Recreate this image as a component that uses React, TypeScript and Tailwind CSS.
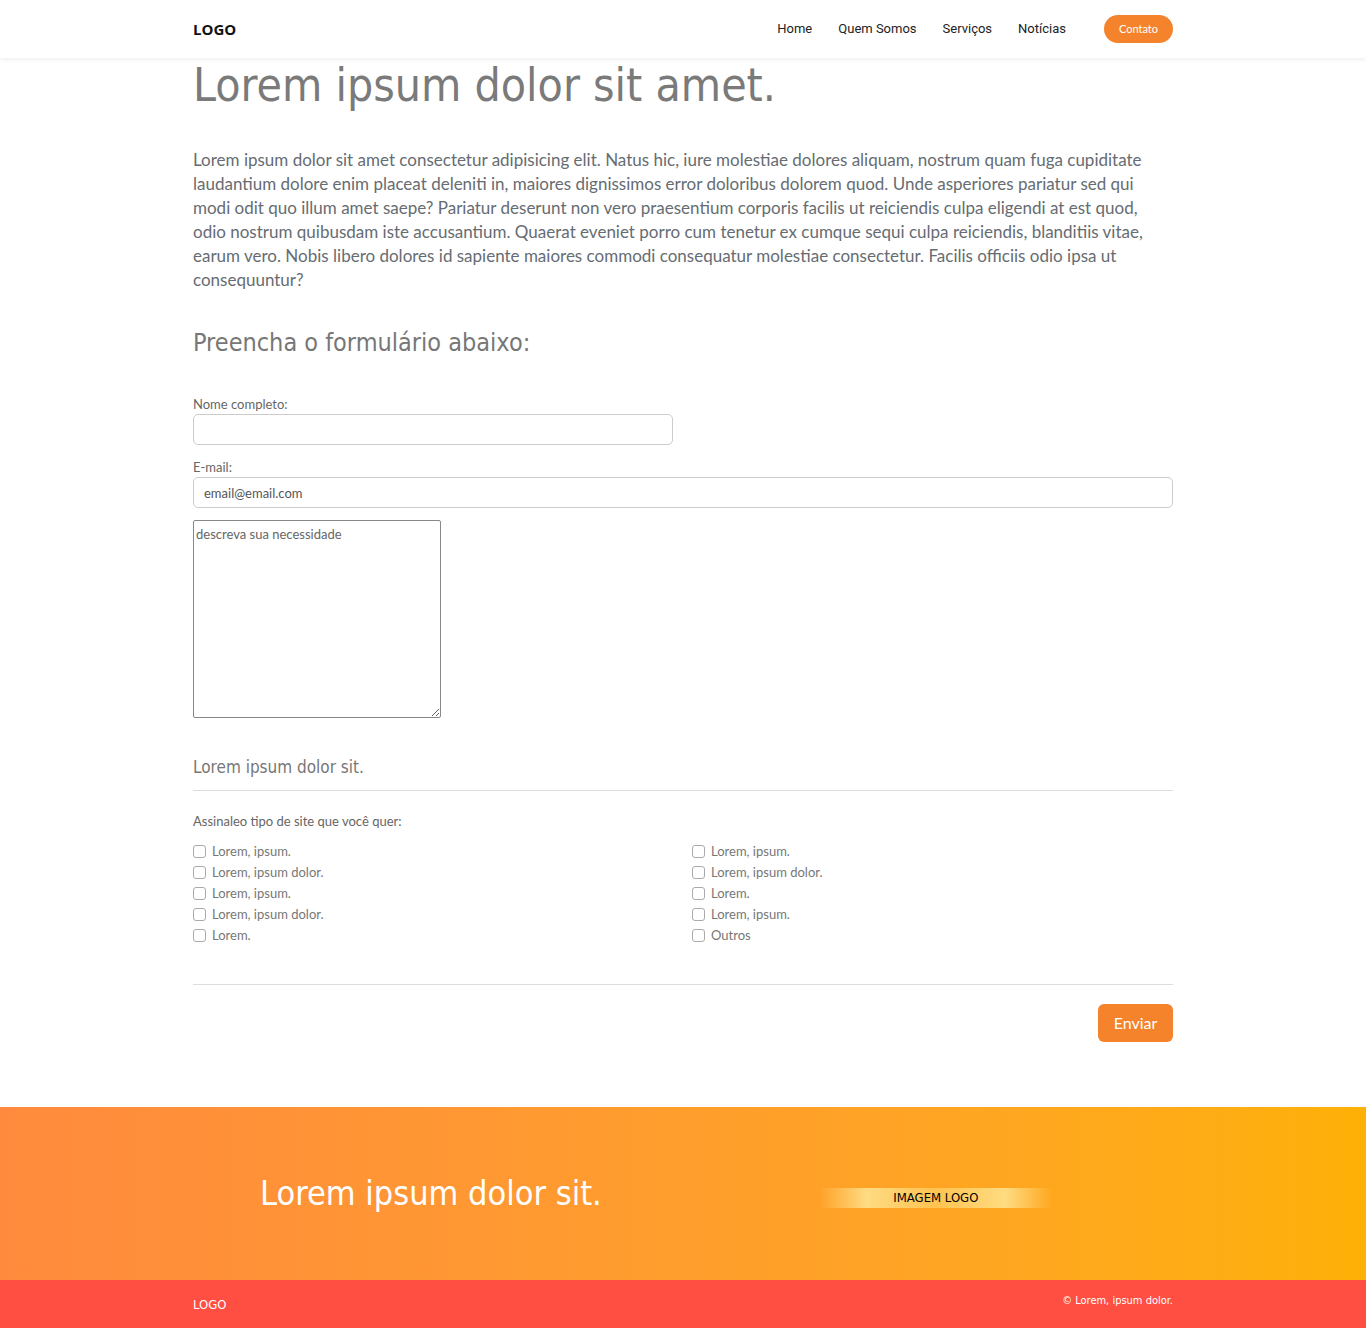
import React from 'react'

const heading = '"Liberation Sans Narrow", "DejaVu Sans Condensed", "Roboto", sans-serif'
const body = '"Lato", "Noto Sans", sans-serif'

const colA = ['Lorem, ipsum.', 'Lorem, ipsum dolor.', 'Lorem, ipsum.', 'Lorem, ipsum dolor.', 'Lorem.']
const colB = ['Lorem, ipsum.', 'Lorem, ipsum dolor.', 'Lorem.', 'Lorem, ipsum.', 'Outros']

function Check({ label }: { label: string }) {
  return (
    <label className="flex h-[21px] items-center gap-[6px] text-[13px] text-[#777]">
      <span className="h-[13px] w-[13px] rounded-[3px] border border-[#aaa] bg-white" />
      {label}
    </label>
  )
}

export default function App() {
  return (
    <div className="min-h-screen bg-white" style={{ fontFamily: body }}>
      <header className="relative z-10 h-[58px] bg-white shadow-[0_2px_4px_rgba(0,0,0,0.06)]">
        <div className="mx-auto flex h-full max-w-[980px] items-center justify-between">
          <span className="text-[15px] font-bold text-[#111]" style={{ fontFamily: '"Open Sans", sans-serif' }}>
            LOGO
          </span>
          <nav className="flex items-center text-[13px] text-[#222]" style={{ fontFamily: '"Roboto", sans-serif' }}>
            <a className="mr-[26px]">Home</a>
            <a className="mr-[26px]">Quem Somos</a>
            <a className="mr-[26px]">Serviços</a>
            <a className="mr-[38px]">Notícias</a>
            <a className="flex h-[28px] w-[69px] items-center justify-center rounded-full bg-[#f5832b] text-[11px] text-white" style={{ fontFamily: body }}>
              Contato
            </a>
          </nav>
        </div>
      </header>

      <main className="mx-auto max-w-[980px] pb-[65px]">
        <h1 className="text-[46px] leading-[54px] text-[#7a7a7a]" style={{ fontFamily: heading }}>
          Lorem ipsum dolor sit amet.
        </h1>
        <p className="mt-[36px] text-[17px] leading-[24px] text-[#666c72]">
          Lorem ipsum dolor sit amet consectetur adipisicing elit. Natus hic, iure molestiae dolores aliquam, nostrum quam fuga
          cupiditate laudantium dolore enim placeat deleniti in, maiores dignissimos error doloribus dolorem quod. Unde asperiores
          pariatur sed qui modi odit quo illum amet saepe? Pariatur deserunt non vero praesentium corporis facilis ut reiciendis
          culpa eligendi at est quod, odio nostrum quibusdam iste accusantium. Quaerat eveniet porro cum tenetur ex cumque sequi
          culpa reiciendis, blanditiis vitae, earum vero. Nobis libero dolores id sapiente maiores commodi consequatur molestiae
          consectetur. Facilis officiis odio ipsa ut consequuntur?
        </p>

        <h2 className="mt-[36px] text-[25px] leading-[30px] text-[#777]" style={{ fontFamily: heading }}>
          Preencha o formulário abaixo:
        </h2>

        <form className="mt-[37px]">
          <label className="block text-[13px] leading-[18px] text-[#666]">Nome completo:</label>
          <input className="mt-[1px] block h-[31px] w-[480px] rounded-[5px] border border-[#ccc] px-[10px] text-[13px]" />

          <label className="mt-[13px] block text-[13px] leading-[18px] text-[#666]">E-mail:</label>
          <input
            className="mt-[1px] block h-[31px] w-full rounded-[5px] border border-[#ccc] px-[10px] text-[13px] text-[#555] placeholder:text-[#555]"
            placeholder="email@email.com"
          />

          <textarea
            className="mt-[12px] block h-[198px] w-[248px] rounded-[2px] border border-[#888] px-[2px] py-[4px] text-[13px] text-[#555] placeholder:text-[#666]"
            placeholder="descreva sua necessidade"
          />

          <h3 className="mt-[38px] text-[17px] leading-[22px] text-[#777]" style={{ fontFamily: heading }}>
            Lorem ipsum dolor sit.
          </h3>
          <hr className="mt-[12px] border-[#ddd]" />

          <p className="mt-[21px] text-[13px] leading-[18px] text-[#666]">Assinaleo tipo de site que você quer:</p>
          <div className="mt-[11px] grid grid-cols-[499px_1fr]">
            <div>
              {colA.map((l, i) => (
                <Check key={i} label={l} />
              ))}
            </div>
            <div>
              {colB.map((l, i) => (
                <Check key={i} label={l} />
              ))}
            </div>
          </div>

          <hr className="mt-[38px] border-[#ddd]" />
          <div className="mt-[19px] flex justify-end">
            <button
              type="button"
              className="h-[38px] w-[75px] rounded-[6px] bg-[#f5832b] text-[16px] text-white"
            >
              Enviar
            </button>
          </div>
        </form>
      </main>

      <section className="h-[173px] bg-gradient-to-r from-[#ff8a3d] to-[#feb005]">
        <div className="mx-auto flex h-full max-w-[980px] items-center">
          <h2 className="ml-[67px] text-[34px] text-white" style={{ fontFamily: heading }}>
            Lorem ipsum dolor sit.
          </h2>
          <div
            className="ml-[218px] mt-[8px] flex h-[20px] w-[232px] items-center justify-center bg-[linear-gradient(90deg,rgba(255,230,150,0)_0%,rgba(255,225,140,0.9)_20%,rgba(255,215,110,0.6)_50%,rgba(255,225,140,0.9)_80%,rgba(255,230,150,0)_100%)] text-[13px] text-black"
            style={{ fontFamily: heading }}
          >
            IMAGEM LOGO
          </div>
        </div>
      </section>

      <footer className="h-[48px] bg-[#ff4e42]">
        <div className="mx-auto flex h-full max-w-[980px] items-center justify-between text-white">
          <span className="mt-[2px] text-[13px]" style={{ fontFamily: heading }}>LOGO</span>
          <span className="mb-[6px] text-[11px]" style={{ fontFamily: heading }}>© Lorem, ipsum dolor.</span>
        </div>
      </footer>
    </div>
  )
}
